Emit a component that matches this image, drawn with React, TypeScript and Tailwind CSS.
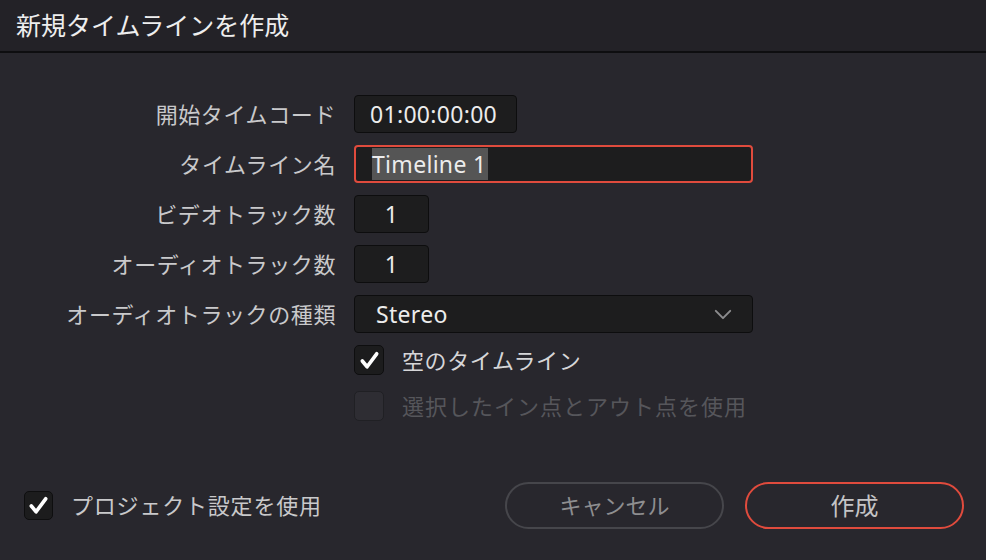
import React, { useState } from 'react';

const FONT = '"Noto Sans", "Noto Sans CJK JP", sans-serif';

const CheckMark = () => (
  <svg viewBox="0 0 24 24" className="size-[23px]">
    <path
      d="M4.5 12.5 L9.5 18.5 L19.5 5"
      fill="none"
      stroke="#ffffff"
      strokeWidth="3.8"
      strokeLinecap="round"
      strokeLinejoin="round"
    />
  </svg>
);

const Checkbox = ({
  checked,
  disabled,
  size = 'size-[30px]',
  onClick,
}: {
  checked: boolean;
  disabled?: boolean;
  size?: string;
  onClick?: () => void;
}) => (
  <button
    type="button"
    onClick={onClick}
    disabled={disabled}
    className={`${size} flex shrink-0 items-center justify-center rounded-[5px] border ${
      disabled ? 'border-[#202024] bg-[#2e2d33]' : 'border-[#0e0e0f] bg-[#1c1c1d]'
    }`}
  >
    {checked && <CheckMark />}
  </button>
);

const Label = ({ children }: { children: React.ReactNode }) => (
  <div className="flex h-[38px] items-center justify-end text-[22px] tracking-[0.6px] text-[#c9c9cb]">
    {children}
  </div>
);

const boxClass =
  'flex h-[38px] items-center rounded-[4px] border border-[#0d0d0e] bg-[#1d1d1e] text-[23px] tracking-[0.3px] text-[#ececec]';

export default function App() {
  const [empty, setEmpty] = useState(true);
  const [useProject, setUseProject] = useState(true);

  return (
    <div
      className="flex h-[560px] w-[986px] flex-col bg-[#28272d]"
      style={{ fontFamily: FONT }}
    >
      <div className="flex h-[53px] items-center border-b-2 border-[#0e0e10] bg-[#232227] pl-4 text-[25px] text-[#eeeeee]">
        新規タイムラインを作成
      </div>

      <div className="grid grid-cols-[336px_1fr] gap-x-[18px] gap-y-3 pt-[42px]">
        <Label>開始タイムコード</Label>
        <div className={`${boxClass} w-[163px] pl-[15px]`}>01:00:00:00</div>

        <Label>タイムライン名</Label>
        <div className="flex h-[38px] w-[399px] items-center rounded-[4px] border-2 border-[#e04b3d] bg-[#1d1d1e] py-[1px] pl-4 text-[23px] tracking-[0.3px] text-[#ececec]">
          <span className="flex h-full items-center bg-[#555555] pr-[2px]">Timeline 1</span>
        </div>

        <Label>ビデオトラック数</Label>
        <div className={`${boxClass} w-[75px] justify-center`}>1</div>

        <Label>オーディオトラック数</Label>
        <div className={`${boxClass} w-[75px] justify-center`}>1</div>

        <Label>オーディオトラックの種類</Label>
        <div className={`${boxClass} w-[399px] justify-between pl-[21px] pr-[20px]`}>
          <span>Stereo</span>
          <svg viewBox="0 0 20 12" className="h-[11px] w-[18px]">
            <path
              d="M2 2 L10 10 L18 2"
              fill="none"
              stroke="#8c8c8e"
              strokeWidth="2.2"
              strokeLinecap="round"
              strokeLinejoin="round"
            />
          </svg>
        </div>
      </div>

      <div className="ml-[354px] mt-3 flex flex-col gap-4">
        <div className="flex h-[30px] items-center gap-[18px]">
          <Checkbox checked={empty} onClick={() => setEmpty((v) => !v)} />
          <span className="text-[22px] tracking-[0.6px] text-[#d6d6d8]">空のタイムライン</span>
        </div>
        <div className="flex h-[30px] items-center gap-[18px]">
          <Checkbox checked={false} disabled />
          <span className="text-[22px] tracking-[1px] text-[#56565b]">選択したイン点とアウト点を使用</span>
        </div>
      </div>

      <div className="mt-auto flex items-center pb-[31px] pl-6 pr-[22px]">
        <div className="flex items-center gap-[18px]">
          <Checkbox
            checked={useProject}
            size="size-[29px]"
            onClick={() => setUseProject((v) => !v)}
          />
          <span className="text-[22px] tracking-[0.8px] text-[#c9c9cb]">プロジェクト設定を使用</span>
        </div>
        <div className="ml-auto flex gap-[21px]">
          <button
            type="button"
            className="flex h-[47px] w-[219px] items-center justify-center rounded-full border-2 border-[#46464b] text-[22px] text-[#8e8e90]"
          >
            キャンセル
          </button>
          <button
            type="button"
            className="flex h-[47px] w-[219px] items-center justify-center rounded-full border-2 border-[#e04b3d] text-[24px] text-[#c4c4c6]"
          >
            作成
          </button>
        </div>
      </div>
    </div>
  );
}
